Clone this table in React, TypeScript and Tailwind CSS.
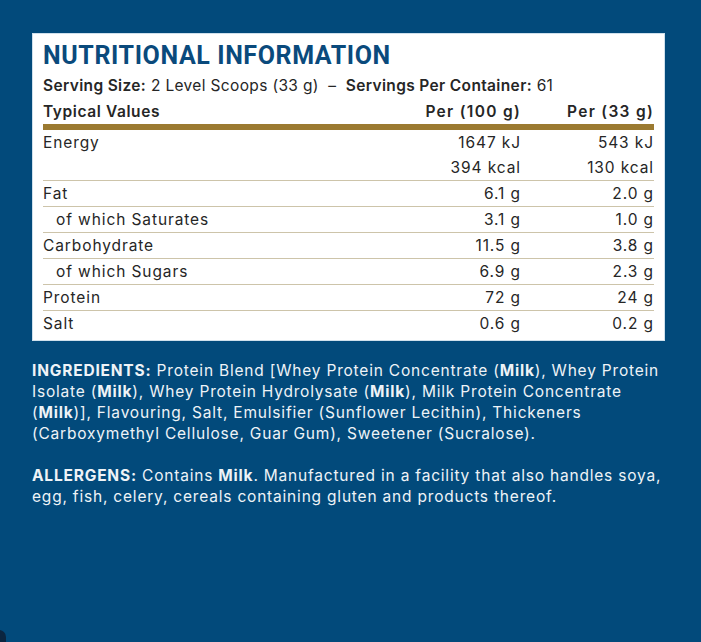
const rows = [
  { label: "Fat", a: "6.1 g", b: "2.0 g" },
  { label: "of which Saturates", a: "3.1 g", b: "1.0 g", sub: true },
  { label: "Carbohydrate", a: "11.5 g", b: "3.8 g" },
  { label: "of which Sugars", a: "6.9 g", b: "2.3 g", sub: true },
  { label: "Protein", a: "72 g", b: "24 g" },
  { label: "Salt", a: "0.6 g", b: "0.2 g", last: true },
];

const App = () => {
  return (
    <div
      className="relative w-full h-[642px] overflow-hidden bg-[#024a7b] pl-[32px] pt-[33px]"
      style={{ fontFamily: "Inter, 'Liberation Sans', sans-serif" }}
    >
      {/* Nutrition panel */}
      <div className="w-[633px] bg-white border border-[#cfe0ec] px-[10px] pt-[7px] pb-[4px] text-[#262626]">
        <h1
          className="text-[25px] leading-[30px] font-bold tracking-[0.6px] text-[#0a4a7c]"
          style={{ fontFamily: "Roboto, 'Liberation Sans', sans-serif" }}
        >
          NUTRITIONAL INFORMATION
        </h1>
        <p className="mt-[2px] text-[15.5px] leading-[26px] tracking-[0.35px]">
          <span className="font-semibold">Serving Size:</span> 2 Level Scoops (33 g)
          &nbsp;–&nbsp; <span className="font-semibold">Servings Per Container:</span> 61
        </p>

        {/* Table head */}
        <div className="grid grid-cols-[1fr_130px_133px] text-[15.5px] leading-[25px] font-semibold tracking-[0.6px]">
          <span>Typical Values</span>
          <span className="text-right tracking-[1.3px]">Per (100 g)</span>
          <span className="text-right tracking-[1.3px]">Per (33 g)</span>
        </div>
        <div className="h-[6px] bg-[#9b7a31]" />

        {/* Energy */}
        <div className="grid grid-cols-[1fr_130px_133px] text-[15.5px] leading-[25px] tracking-[0.9px] border-b border-[#cdc4aa]">
          <span>Energy</span>
          <span className="text-right">1647 kJ</span>
          <span className="text-right">543 kJ</span>
          <span />
          <span className="text-right">394 kcal</span>
          <span className="text-right">130 kcal</span>
        </div>

        {rows.map((r) => (
          <div
            key={r.label}
            className={
              "grid grid-cols-[1fr_130px_133px] text-[15.5px] leading-[25px] tracking-[0.9px] " +
              (r.last ? "" : "border-b border-[#cdc4aa]")
            }
          >
            <span className={r.sub ? "pl-[13px]" : ""}>{r.label}</span>
            <span className="text-right">{r.a}</span>
            <span className="text-right">{r.b}</span>
          </div>
        ))}
      </div>

      {/* Ingredients & allergens */}
      <div className="w-[636px] mt-[19px] text-[15.5px] leading-[21px] tracking-[0.8px] text-[#eef3f7]">
        <p>
          <span className="font-bold">INGREDIENTS:</span> Protein Blend [Whey Protein Concentrate (
          <span className="font-bold">Milk</span>), Whey Protein Isolate (
          <span className="font-bold">Milk</span>), Whey Protein Hydrolysate (
          <span className="font-bold">Milk</span>), Milk Protein Concentrate (
          <span className="font-bold">Milk</span>)], Flavouring, Salt, Emulsifier (Sunflower
          Lecithin), Thickeners (Carboxymethyl Cellulose, Guar Gum), Sweetener (Sucralose).
        </p>
        <p className="mt-[21px]">
          <span className="font-bold">ALLERGENS:</span> Contains{" "}
          <span className="font-bold">Milk</span>. Manufactured in a facility that also handles
          soya, egg, fish, celery, cereals containing gluten and products thereof.
        </p>
      </div>

      {/* corner shadow */}
      <div className="absolute left-[-8px] bottom-[-8px] w-[14px] h-[20px] rounded-full bg-[#0b2540]" />
    </div>
  );
};

export default App;
